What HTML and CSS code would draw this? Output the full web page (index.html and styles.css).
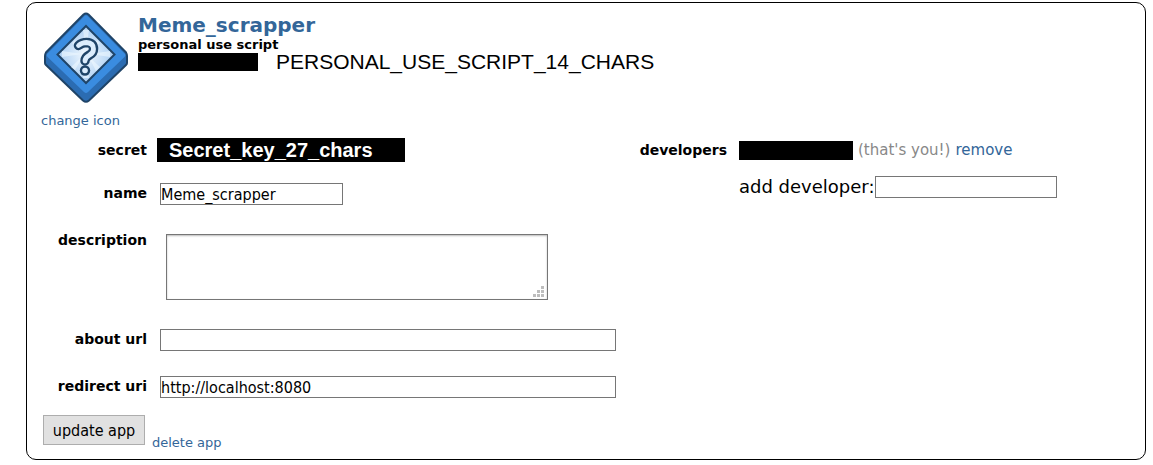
FILE: index.html
```html
<!DOCTYPE html>
<html lang="en">
<head>
<meta charset="utf-8">
<title>Meme_scrapper</title>
<link rel="stylesheet" href="styles.css">
</head>
<body>
<main class="app-card">
  <header class="app-header">
    <svg class="app-icon" viewBox="0 0 84 91" aria-hidden="true">
      <defs>
        <radialGradient id="glow">
          <stop offset="0" stop-color="#f2f9ff"/>
          <stop offset="1" stop-color="#a9cdf2"/>
        </radialGradient>
      </defs>
      <path d="M39.500 2.500Q42 .5 44.500 2.500L82 40.500Q83 42 83 44V51Q83 52 82 53L45 88.500Q42 91 39 88.500L2 53Q1 52 1 51V44Q1 42 2 40.500Z" fill="#2b6cb2" stroke="#1f4468" stroke-width="2"/>
      <path d="M40.500 4Q42 2.500 43.500 4L81 42Q82 43.500 80.500 45L44 80Q42 82 40 80L3.500 45Q2 43.500 3 42Z" fill="#3a8ce0"/>
      <path d="M42 14 70.500 42.500 42 71 13.500 42.500Z" fill="url(#glow)" stroke="#1f4468" stroke-width="2"/>
      <path d="M40 40 28 31l3-3zM42 40 39 18h6zM45 40 56 31l-3-3zM46 42 66 39v6zM45 45 56 55l-4 4zM42 46 45 66h-6zM39 44 31 58l-4-3zM38 42 18 39v6z" fill="#eff8ff" opacity=".6"/>
      <path d="M34.500 33.500Q38 30.500 42.500 30.500Q49.500 31 49.500 37Q49.500 41 45.500 43Q41 45.500 41 49" fill="none" stroke="#1f4468" stroke-width="9.500" stroke-linecap="round" stroke-linejoin="round"/>
      <circle cx="41" cy="58.500" r="5.200" fill="#1f4468"/>
      <path d="M34.500 33.500Q38 30.500 42.500 30.500Q49.500 31 49.500 37Q49.500 41 45.500 43Q41 45.500 41 49" fill="none" stroke="#dcedfd" stroke-width="4.800" stroke-linecap="round" stroke-linejoin="round"/>
      <circle cx="41" cy="58.500" r="2.800" fill="#dcedfd"/>
    </svg>
    <div class="app-details">
      <h1 class="app-name"><a href="#">Meme_scrapper</a></h1>
      <p class="app-type">personal use script</p>
      <p class="app-id"><span class="mask mask-id"></span>PERSONAL_USE_SCRIPT_14_CHARS</p>
    </div>
  </header>
  <a class="small-link change-icon" href="#">change icon</a>

  <form class="app-form">
    <div class="columns">
      <div class="fields">
        <div class="field field-secret">
          <span class="label">secret</span>
          <span class="secret">Secret_key_27_chars</span>
        </div>
        <div class="field">
          <label class="label" for="name">name</label>
          <input class="text-box short" id="name" type="text" value="Meme_scrapper">
        </div>
        <div class="field">
          <label class="label" for="description">description</label>
          <div class="area">
            <textarea class="area-box" id="description"></textarea>
            <svg class="grip" viewBox="0 0 11 11" aria-hidden="true"><path d="M8 0h3v3H8zM4 4h3v3H4zM8 4h3v3H8zM0 8h3v3H0zM4 8h3v3H4zM8 8h3v3H8z" fill="#bdbdbd"/></svg>
          </div>
        </div>
        <div class="field">
          <label class="label" for="about">about url</label>
          <input class="text-box" id="about" type="text">
        </div>
        <div class="field">
          <label class="label" for="redirect">redirect uri</label>
          <input class="text-box" id="redirect" type="text" value="http://localhost:8080">
        </div>
      </div>
      <section class="developers">
        <h2 class="label">developers</h2>
        <div class="developer-list">
          <p class="developer"><span class="mask mask-user"></span><span class="you">(that's you!)</span> <a href="#">remove</a></p>
          <div class="add-developer">
            <label for="developer">add developer:</label>
            <input class="text-box" id="developer" type="text">
          </div>
        </div>
      </section>
    </div>
    <div class="actions">
      <button class="update" type="submit">update app</button>
      <a class="small-link" href="#">delete app</a>
    </div>
  </form>
</main>
</body>
</html>
```
FILE: styles.css
```css
* { box-sizing: border-box; }

body {
  margin: 0;
  background: #fff;
  color: #000;
  font-family: Verdana, "DejaVu Sans", sans-serif;
}

h1, h2, p { margin: 0; }

a {
  color: #336699;
  text-decoration: none;
}

.app-card {
  margin: 2px 7px 4px 26px;
  padding: 9px 14px 14px;
  border: 1px solid #000;
  border-radius: 10px;
}

.app-header {
  display: flex;
  gap: 10px;
  padding-left: 3px;
}

.app-icon {
  width: 84px;
  height: 91px;
}

.app-name {
  font-size: 20px;
  line-height: 26px;
}

.app-type {
  font-size: 13px;
  font-weight: bold;
  line-height: 14px;
}

.app-id {
  display: flex;
  align-items: center;
  gap: 18px;
  font: 21px/20px Arial, "Liberation Sans", sans-serif;
}

.mask {
  display: inline-block;
  background: #000;
}

.mask-id {
  width: 120px;
  height: 18px;
}

.small-link {
  font-size: 13px;
  line-height: 16px;
}

.change-icon {
  display: block;
  margin-top: 10px;
}

.app-form { margin-top: 9px; }

.columns {
  display: flex;
  gap: 21px;
}

.fields { flex: 0 1 575px; min-width: 0; }

.field {
  display: flex;
  align-items: flex-start;
  gap: 13px;
  margin-bottom: 25px;
}

.field-secret {
  align-items: center;
  gap: 10px;
  margin-bottom: 21px;
}

.label {
  flex: none;
  width: 106px;
  font-size: 14px;
  font-weight: bold;
  line-height: 20px;
  text-align: right;
}

.secret {
  width: 248px;
  padding-left: 12px;
  background: #000;
  color: #fff;
  font: bold 20px/24px Arial, "Liberation Sans", sans-serif;
}

.text-box {
  flex: 1;
  min-width: 0;
  height: 22px;
  padding: 1px 0 0;
  border: 1px solid #767676;
  background: #fff;
  font: 16px/20px Tahoma, "DejaVu Sans Condensed", sans-serif;
}

.short { flex: 0 1 183px; }

.area {
  position: relative;
  flex: 0 1 382px;
  margin: 4px 0 4px 6px;
}

.area-box {
  display: block;
  width: 100%;
  height: 66px;
  border: 1px solid #767676;
  box-shadow: inset 0 1px 2px #bbb;
  resize: none;
  font: 16px/20px Tahoma, "DejaVu Sans Condensed", sans-serif;
}

.grip {
  position: absolute;
  right: 4px;
  bottom: 3px;
  width: 11px;
  height: 11px;
}

.developers {
  display: flex;
  flex: 1;
  gap: 12px;
  padding-top: 2px;
}

.developers .label { width: 90px; }

.developer-list { white-space: nowrap; }

.developer {
  display: flex;
  align-items: center;
  gap: 5px;
  font-size: 15px;
  line-height: 20px;
}

.mask-user {
  width: 114px;
  height: 19px;
}

.you { color: #888; }

.add-developer {
  display: flex;
  align-items: center;
  margin-top: 16px;
  font-size: 18px;
  line-height: 22px;
}

.add-developer .text-box { flex: 0 1 184px; }

.actions {
  display: flex;
  align-items: flex-end;
  gap: 7px;
  margin-top: -8px;
  padding-left: 2px;
}

.update {
  width: 102px;
  height: 30px;
  padding: 2px 0 0;
  border: 1px solid #adadad;
  background: #e1e1e1;
  font: 16px/20px Tahoma, "DejaVu Sans Condensed", sans-serif;
}

.actions .small-link { margin-bottom: -6px; }
```
